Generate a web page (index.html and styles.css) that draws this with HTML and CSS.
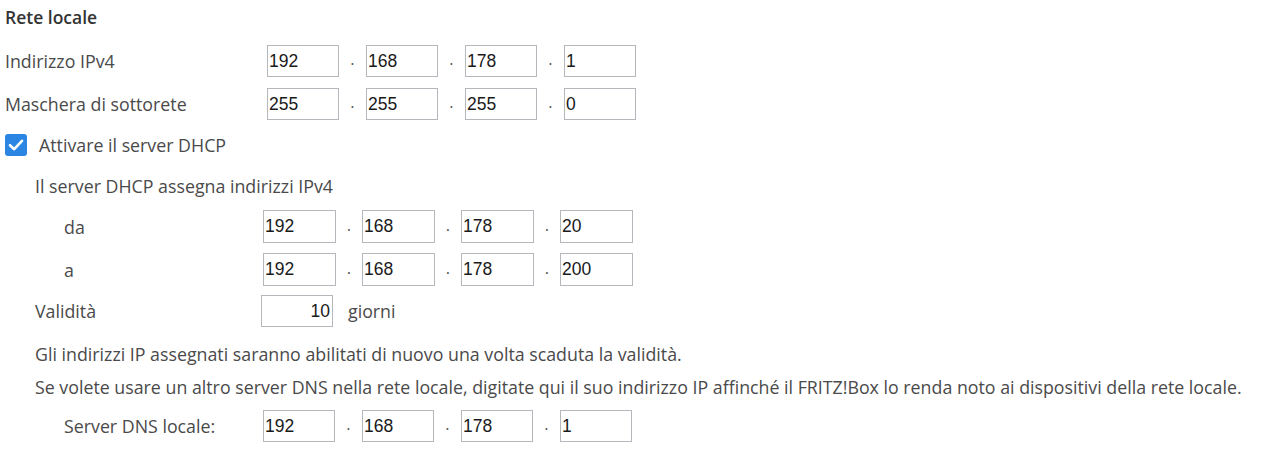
FILE: index.html
```html
<!DOCTYPE html>
<html lang="it">
<head>
<meta charset="utf-8">
<title>Rete locale</title>
<link rel="stylesheet" href="styles.css">
</head>
<body>
<div class="page">
  <h2 class="title">Rete locale</h2>

  <div class="row row-main">
    <span class="label">Indirizzo IPv4</span>
    <div class="ip">
      <input class="octet" value="192"><span class="dot">.</span>
      <input class="octet" value="168"><span class="dot">.</span>
      <input class="octet" value="178"><span class="dot">.</span>
      <input class="octet" value="1">
    </div>
  </div>

  <div class="row row-main row-mask">
    <span class="label">Maschera di sottorete</span>
    <div class="ip">
      <input class="octet" value="255"><span class="dot">.</span>
      <input class="octet" value="255"><span class="dot">.</span>
      <input class="octet" value="255"><span class="dot">.</span>
      <input class="octet" value="0">
    </div>
  </div>

  <label class="check">
    <span class="box"><svg width="22" height="22" viewBox="0 0 22 22"><path d="M5 11.2 L9.2 15.2 L17 6.8" fill="none" stroke="#fff" stroke-width="2.6" stroke-linecap="round" stroke-linejoin="round"/></svg></span>
    <span class="check-text">Attivare il server DHCP</span>
  </label>

  <div class="dhcp">
    <p class="text text-first">Il server DHCP assegna indirizzi IPv4</p>

    <div class="row row-sub row-da">
      <span class="label label-sub">da</span>
      <div class="ip ip-sub">
        <input class="octet" value="192"><span class="dot">.</span>
        <input class="octet" value="168"><span class="dot">.</span>
        <input class="octet" value="178"><span class="dot">.</span>
        <input class="octet" value="20">
      </div>
    </div>

    <div class="row row-sub row-a">
      <span class="label label-sub">a</span>
      <div class="ip ip-sub">
        <input class="octet" value="192"><span class="dot">.</span>
        <input class="octet" value="168"><span class="dot">.</span>
        <input class="octet" value="178"><span class="dot">.</span>
        <input class="octet" value="200">
      </div>
    </div>

    <div class="row row-valid">
      <span class="label label-valid">Validità</span>
      <input class="days" value="10">
      <span class="unit">giorni</span>
    </div>

    <p class="text text-gli">Gli indirizzi IP assegnati saranno abilitati di nuovo una volta scaduta la validità.</p>
    <p class="text text-se">Se volete usare un altro server DNS nella rete locale, digitate qui il suo indirizzo IP affinché il FRITZ!Box lo renda noto ai dispositivi della rete locale.</p>

    <div class="row row-sub row-dns">
      <span class="label label-sub">Server DNS locale:</span>
      <div class="ip ip-sub">
        <input class="octet" value="192"><span class="dot">.</span>
        <input class="octet" value="168"><span class="dot">.</span>
        <input class="octet" value="178"><span class="dot">.</span>
        <input class="octet" value="1">
      </div>
    </div>
  </div>
</div>
</body>
</html>
```

FILE: styles.css
```css
* { box-sizing: border-box; }

html, body {
  margin: 0;
  padding: 0;
  background: #ffffff;
}

body {
  font-family: "Open Sans", "Lato", sans-serif;
  font-size: 17.8px;
  color: #4a4a4a;
}

.page {
  padding: 5px 0 0 5px;
}

.title {
  margin: 0;
  height: 24px;
  line-height: 24px;
  font-size: 17.5px;
  font-weight: 600;
  color: #333333;
}

.row {
  display: flex;
  align-items: center;
}

.row-main { margin-top: 16px; }
.row-mask { margin-top: 11px; }

.label {
  flex: none;
  width: 262px;
  line-height: 24px;
}

.ip {
  display: flex;
  align-items: center;
}

.octet {
  width: 72px;
  height: 32px;
  margin: 0;
  padding: 0 0 0 1px;
  border: 1px solid #b4b8bc;
  border-radius: 0;
  background: #fff;
  font-family: "Liberation Sans", Arial, sans-serif;
  font-size: 17.5px;
  color: #1a1a1a;
  outline: none;
}

.dot {
  width: 27px;
  text-align: center;
  font-family: "DejaVu Sans", sans-serif;
  font-size: 15px;
  line-height: 15px;
  padding-bottom: 1px;
  color: #5a5a5a;
}

.check {
  display: flex;
  align-items: center;
  margin-top: 14px;
  height: 22px;
}

.box {
  flex: none;
  width: 22px;
  height: 22px;
  border-radius: 3px;
  background: #2a86e2;
  display: flex;
}

.check-text {
  margin-left: 12px;
  line-height: 22px;
}

.dhcp {
  padding-left: 30px;
}

.text {
  margin: 0;
  line-height: 24px;
}

.text-first { margin-top: 18px; }

.row-sub .octet { width: 73px; height: 33px; }
.ip-sub .dot { width: 26px; }

.label-sub {
  width: 228px;
  padding-left: 29px;
}

.row-da { margin-top: 12px; }
.row-a { margin-top: 10px; }

.row-valid { margin-top: 9px; }

.label-valid { width: 226px; }

.days {
  width: 72px;
  height: 32px;
  margin: 0;
  padding: 0 2px 0 0;
  border: 1px solid #b4b8bc;
  border-radius: 0;
  text-align: right;
  font-family: "Liberation Sans", Arial, sans-serif;
  font-size: 17.5px;
  color: #1a1a1a;
  outline: none;
}

.unit {
  margin-left: 15px;
  line-height: 24px;
}

.text-gli { margin-top: 15px; }
.text-se { margin-top: 9px; }

.row-dns { margin-top: 11px; }
.row-dns .octet { height: 32px; width: 72px; }
.row-dns .dot { width: 27px; }
```
